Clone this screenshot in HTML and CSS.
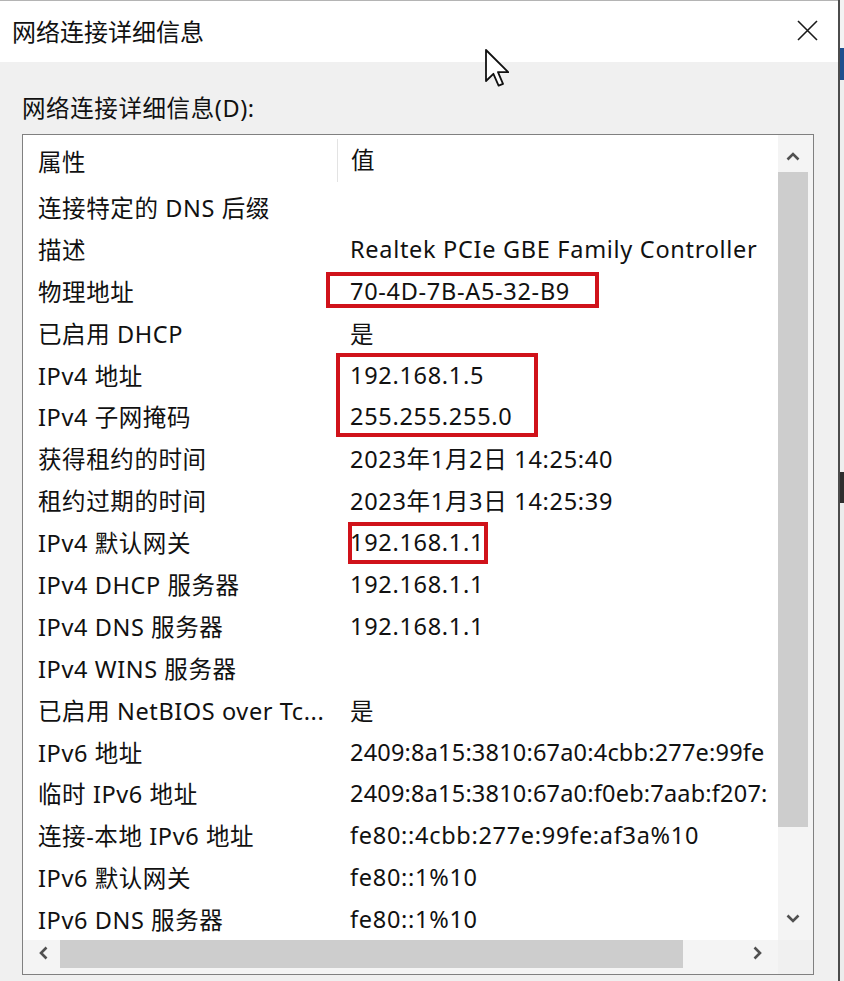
FILE: index.html
```html
<!DOCTYPE html>
<html lang="zh-CN">
<head>
<meta charset="utf-8">
<title>网络连接详细信息</title>
<link rel="stylesheet" href="styles.css">
</head>
<body>
<div class="screen">
  <div class="dialog">
    <div class="titlebar">
      <span class="title">网络连接详细信息</span>
      <svg class="close" width="21" height="21" viewBox="0 0 21 21"><path d="M1 1 L20 20 M20 1 L1 20" stroke="#1a1a1a" stroke-width="1.6" fill="none"/></svg>
    </div>
    <div class="body">
      <div class="label">网络连接详细信息(D):</div>
      <div class="listbox">
        <div class="list">
          <div class="row head"><div class="c1">属性</div><div class="c2 sep">值</div></div>
          <div class="row"><div class="c1">连接特定的 DNS 后缀</div><div class="c2"></div></div>
          <div class="row"><div class="c1">描述</div><div class="c2">Realtek PCIe GBE Family Controller</div></div>
          <div class="row"><div class="c1">物理地址</div><div class="c2">70-4D-7B-A5-32-B9</div></div>
          <div class="row"><div class="c1">已启用 DHCP</div><div class="c2">是</div></div>
          <div class="row"><div class="c1">IPv4 地址</div><div class="c2">192.168.1.5</div></div>
          <div class="row"><div class="c1">IPv4 子网掩码</div><div class="c2">255.255.255.0</div></div>
          <div class="row"><div class="c1">获得租约的时间</div><div class="c2">2023年1月2日 14:25:40</div></div>
          <div class="row"><div class="c1">租约过期的时间</div><div class="c2">2023年1月3日 14:25:39</div></div>
          <div class="row"><div class="c1">IPv4 默认网关</div><div class="c2">192.168.1.1</div></div>
          <div class="row"><div class="c1">IPv4 DHCP 服务器</div><div class="c2">192.168.1.1</div></div>
          <div class="row"><div class="c1">IPv4 DNS 服务器</div><div class="c2">192.168.1.1</div></div>
          <div class="row"><div class="c1">IPv4 WINS 服务器</div><div class="c2"></div></div>
          <div class="row"><div class="c1">已启用 NetBIOS over Tc...</div><div class="c2">是</div></div>
          <div class="row"><div class="c1">IPv6 地址</div><div class="c2 tight">2409:8a15:3810:67a0:4cbb:277e:99fe</div></div>
          <div class="row"><div class="c1">临时 IPv6 地址</div><div class="c2 tight">2409:8a15:3810:67a0:f0eb:7aab:f207:</div></div>
          <div class="row"><div class="c1">连接-本地 IPv6 地址</div><div class="c2">fe80::4cbb:277e:99fe:af3a%10</div></div>
          <div class="row"><div class="c1">IPv6 默认网关</div><div class="c2">fe80::1%10</div></div>
          <div class="row"><div class="c1">IPv6 DNS 服务器</div><div class="c2">fe80::1%10</div></div>
          <div class="mark m1"></div>
          <div class="mark m2"></div>
          <div class="mark m3"></div>
        </div>
        <div class="vscroll">
          <svg class="arrow" width="14" height="9" viewBox="0 0 14 9"><path d="M1.5 7.5 L7 2 L12.5 7.5" stroke="#505050" stroke-width="2.6" fill="none"/></svg>
          <div class="vthumb"></div>
          <svg class="arrow" width="14" height="9" viewBox="0 0 14 9"><path d="M1.5 1.5 L7 7 L12.5 1.5" stroke="#505050" stroke-width="2.6" fill="none"/></svg>
        </div>
        <div class="hscroll">
          <svg class="harrow" width="9" height="14" viewBox="0 0 9 14"><path d="M7.5 1.5 L2 7 L7.5 12.5" stroke="#505050" stroke-width="2.6" fill="none"/></svg>
          <div class="hthumb"></div>
          <svg class="harrow" width="9" height="14" viewBox="0 0 9 14"><path d="M1.5 1.5 L7 7 L1.5 12.5" stroke="#505050" stroke-width="2.6" fill="none"/></svg>
        </div>
        <div class="corner"></div>
      </div>
    </div>
  </div>
  <div class="outside">
    <div class="o1"></div>
    <div class="o2"></div>
    <div class="o3"></div>
    <div class="o4"></div>
    <div class="o5"></div>
  </div>
  <svg class="cursor" width="25" height="38" viewBox="0 0 12.5 19"><path d="M0.5 0.5 L0.5 16 L4.2 12.4 L6.8 18.3 L9 17.4 L6.5 11.6 L11.6 11.6 Z" fill="#fff" stroke="#111" stroke-width="0.9" stroke-linejoin="round"/></svg>
</div>
</body>
</html>
```

FILE: styles.css
```css
html, body {
  margin: 0;
  padding: 0;
}
body {
  width: 844px;
  height: 981px;
  overflow: hidden;
  font-family: "Noto Sans", "Noto Sans CJK SC", sans-serif;
  color: #111;
  background: #f0f0f0;
}
.screen {
  position: relative;
  display: flex;
  width: 844px;
  height: 981px;
}
.dialog {
  width: 838px;
  height: 981px;
  border-right: 2px solid #4c4c4c;
  background: #f0f0f0;
  display: flex;
  flex-direction: column;
}
.titlebar {
  height: 61px;
  border-top: 1px solid #b4b4b4;
  background: #fff;
  display: flex;
  align-items: center;
  justify-content: space-between;
  padding: 0 20px 0 12px;
}
.title {
  font-size: 24px;
  line-height: 30px;
}
.close {
  display: block;
  margin-top: -2px;
}
.body {
  padding: 31px 0 0 22px;
}
.label {
  font-size: 23.5px;
  letter-spacing: 0.6px;
  line-height: 30px;
  height: 30px;
  margin-bottom: 11px;
}
.listbox {
  width: 790px;
  height: 839px;
  border: 1px solid #808080;
  background: #fff;
  display: grid;
  grid-template-columns: 755px 35px;
  grid-template-rows: 805px 34px;
}
.list {
  position: relative;
  overflow: hidden;
  font-size: 23.5px;
  letter-spacing: 0.7px;
}
.row {
  display: flex;
  height: 41.9px;
  align-items: center;
  white-space: nowrap;
}
.row.head {
  height: 51px;
}
.c1 {
  width: 299px;
  padding-left: 15px;
  flex: none;
  overflow: hidden;
  letter-spacing: 0.6px;
}
.c2 {
  padding-left: 13px;
  flex: none;
}
.c2.tight {
  letter-spacing: 0.2px;
}
.c2.sep {
  border-left: 1px solid #e3e3e3;
  height: 43px;
  line-height: 43px;
}
.mark {
  position: absolute;
  border: 4px solid #d0121a;
  box-sizing: border-box;
}
.m1 { left: 303px; top: 137px; width: 273px; height: 36px; }
.m2 { left: 313px; top: 218px; width: 202px; height: 84px; }
.m3 { left: 325px; top: 387px; width: 140px; height: 42px; }

.vscroll {
  background: #f4f4f4;
  display: flex;
  flex-direction: column;
  align-items: flex-start;
}
.vscroll .arrow {
  display: block;
  margin-left: 8px;
}
.vscroll .arrow:first-child {
  margin-top: 17px;
  margin-bottom: 11px;
}
.vscroll .arrow:last-child {
  margin-top: 87px;
}
.vthumb {
  width: 30px;
  height: 655px;
  background: #cdcdcd;
}
.hscroll {
  background: #f4f4f4;
  display: flex;
  align-items: flex-start;
}
.hscroll .harrow {
  display: block;
  margin-top: 6px;
}
.hscroll .harrow:first-child {
  margin-left: 16px;
  margin-right: 12px;
}
.hscroll .harrow:last-child {
  margin-left: 70px;
}
.hthumb {
  width: 623px;
  height: 28px;
  background: #cdcdcd;
}
.corner {
  background: #f0f0f0;
}
.outside {
  flex: 1;
  display: flex;
  flex-direction: column;
}
.o1 { height: 48px; background: #f3f3f3; }
.o2 { height: 32px; background: #1d4f8e; }
.o3 { height: 392px; background: #eeeeee; }
.o4 { height: 31px; background: #2e2e2e; }
.o5 { flex: 1; background: #ececec; }
.cursor {
  position: absolute;
  left: 485px;
  top: 49px;
}
```
